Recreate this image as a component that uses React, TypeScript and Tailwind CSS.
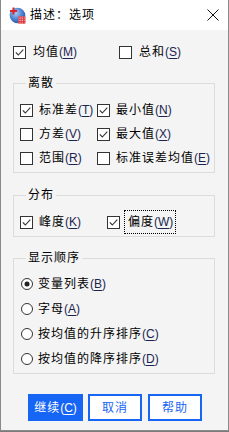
import React from 'react';

const font = { fontFamily: '"Liberation Sans", "Noto Sans CJK SC", sans-serif' };

function Label({ text, k, light }: { text: string; k: string; light?: boolean }) {
  return (
    <span className="whitespace-nowrap text-[12px] leading-[16px]">
      <span className="tracking-[1px]">{text}</span>
      <span className={light ? 'text-white' : 'text-[#1b2450]'}>
        (<span className="underline underline-offset-2">{k}</span>)
      </span>
    </span>
  );
}

function Check({ on }: { on?: boolean }) {
  return (
    <svg width="13" height="13" viewBox="0 0 13 13" className="shrink-0">
      <rect x="0.5" y="0.5" width="12" height="12" fill="#fff" stroke="#333" />
      {on && <path d="M2.8 6.4 L5.3 9 L10.3 3.6" fill="none" stroke="#333" strokeWidth="1.1" />}
    </svg>
  );
}

function Radio({ on }: { on?: boolean }) {
  return (
    <svg width="12" height="12" viewBox="0 0 12 12" className="shrink-0">
      <circle cx="6" cy="6" r="5.5" fill="#fff" stroke="#333" />
      {on && <circle cx="6" cy="6" r="2.5" fill="#222" />}
    </svg>
  );
}

function CheckItem({ text, k, on }: { text: string; k: string; on?: boolean }) {
  return (
    <div className="flex h-[24px] items-center gap-[6px]">
      <Check on={on} />
      <Label text={text} k={k} />
    </div>
  );
}

function RadioItem({ text, k, on }: { text: string; k: string; on?: boolean }) {
  return (
    <div className="flex h-[25px] items-center gap-[5px] pl-[1px]">
      <Radio on={on} />
      <Label text={text} k={k} />
    </div>
  );
}

function Group({ title, className, children }: { title: string; className: string; children: React.ReactNode }) {
  return (
    <fieldset className={`w-[202px] border border-[#dcdcdc] pb-[2px] pl-[6px] ${className}`}>
      <legend className="ml-[6px] px-[2px] text-[12px] leading-[16px] tracking-[1px]">{title}</legend>
      {children}
    </fieldset>
  );
}

function AppIcon() {
  return (
    <svg width="17" height="17" viewBox="0 0 17 17">
      <defs>
        <radialGradient id="g" cx="0.4" cy="0.35" r="0.75">
          <stop offset="0" stopColor="#a9c9f2" />
          <stop offset="0.55" stopColor="#4a80cf" />
          <stop offset="1" stopColor="#1f4d96" />
        </radialGradient>
      </defs>
      <circle cx="8.5" cy="8.5" r="7.8" fill="url(#g)" />
      <rect x="3.5" y="0.5" width="2" height="7" fill="#d8262c" />
      <rect x="1" y="3" width="7" height="2" fill="#d8262c" />
      <rect x="9.5" y="9.5" width="6.5" height="6.5" fill="#fbe3e3" />
      <path d="M9.5 10H16M9.5 12.2H16M9.5 14.4H16M9.5 16H16M10 9.5V16.5M12.2 9.5V16.5M14.4 9.5V16.5M16 9.5V16.5" stroke="#d8262c" strokeWidth="0.9" />
    </svg>
  );
}

export default function App() {
  return (
    <div style={font} className="h-[432px] w-[229px] bg-[#7a7a7a] text-black">
      <div className="flex h-[431px] flex-col border-x border-b border-[#8a8a8a] bg-[#f4f4f4]">
        {/* Title bar */}
        <div className="flex h-[30px] shrink-0 items-center bg-white pl-[8px] pr-[9px]">
          <AppIcon />
          <span className="ml-[4px] text-[12px] tracking-[1px]">描述：选项</span>
          <svg width="12" height="12" viewBox="0 0 12 12" className="ml-auto">
            <path d="M0.5 0.5 L11.5 11.5 M11.5 0.5 L0.5 11.5" stroke="#111" strokeWidth="1" />
          </svg>
        </div>

        {/* Body */}
        <div className="flex flex-col pl-[12px] pt-[10px]">
          <div className="grid grid-cols-[106px_1fr]">
            <div className="flex h-[24px] items-center gap-[7px]">
              <Check on />
              <Label text="均值" k="M" />
            </div>
            <div className="flex h-[24px] items-center gap-[7px]">
              <Check />
              <Label text="总和" k="S" />
            </div>
          </div>

          <Group title="离散" className="mt-[11px] pt-[7px]">
            <div className="grid grid-cols-[77px_1fr]">
              <CheckItem text="标准差" k="T" on />
              <CheckItem text="最小值" k="N" on />
              <CheckItem text="方差" k="V" />
              <CheckItem text="最大值" k="X" on />
              <CheckItem text="范围" k="R" />
              <CheckItem text="标准误差均值" k="E" />
            </div>
          </Group>

          <Group title="分布" className="mt-[14px] pt-[7px]">
            <div className="grid grid-cols-[87px_1fr]">
              <CheckItem text="峰度" k="K" on />
              <div className="flex h-[24px] items-center gap-[4px]">
                <Check on />
                <span className="flex h-[24px] items-center border border-dotted border-black pl-[3px] pr-[2px]">
                  <Label text="偏度" k="W" />
                </span>
              </div>
            </div>
          </Group>

          <Group title="显示顺序" className="mt-[13px] pt-[5px]">
            <RadioItem text="变量列表" k="B" on />
            <RadioItem text="字母" k="A" />
            <RadioItem text="按均值的升序排序" k="C" />
            <RadioItem text="按均值的降序排序" k="D" />
          </Group>

          <div className="ml-[15px] mt-[20px] flex gap-[5px]">
            <button className="flex h-[27px] w-[55px] items-center justify-center bg-[#1765f4] text-white">
              <Label text="继续" k="C" light />
            </button>
            <button className="h-[27px] w-[54px] border-2 border-[#1765f4] bg-white text-[12px] tracking-[1px] text-[#1765f4]">
              取消
            </button>
            <button className="ml-[1px] h-[27px] w-[54px] border-2 border-[#1765f4] bg-white text-[12px] tracking-[1px] text-[#1765f4]">
              帮助
            </button>
          </div>
        </div>
      </div>
    </div>
  );
}
